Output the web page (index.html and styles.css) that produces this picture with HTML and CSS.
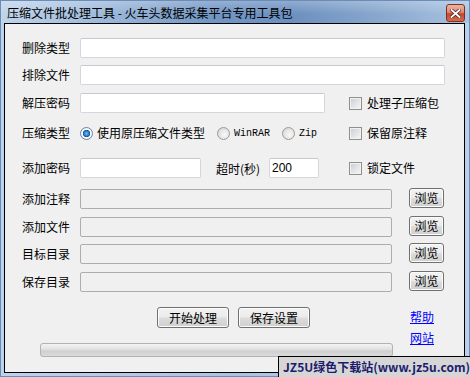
FILE: index.html
```html
<!DOCTYPE html>
<html lang="zh-CN">
<head>
  <meta charset="UTF-8" />
  <title>压缩文件批处理工具</title>
  <link rel="stylesheet" href="styles.css">
</head>
<body>
  <div class="window">
    <!-- ===== title bar ===== -->
    <div class="titlebar">
      <span class="title">压缩文件批处理工具 - 火车头数据采集平台专用工具包</span>
      <span class="close">
        <svg width="11" height="9" viewBox="0 0 11 9">
          <path d="M1.5 1 L9.5 8 M9.5 1 L1.5 8" stroke="#4a2a2a" stroke-width="3.4" stroke-linecap="square"/>
          <path d="M1.5 1 L9.5 8 M9.5 1 L1.5 8" stroke="#fff" stroke-width="1.8" stroke-linecap="square"/>
        </svg>
      </span>
    </div>

    <!-- ===== client area ===== -->
    <div class="client">
      <div class="row">
        <label class="lbl">删除类型</label>
        <input class="txt wide" type="text">
      </div>
      <div class="row gap7">
        <label class="lbl">排除文件</label>
        <input class="txt wide" type="text">
      </div>
      <div class="row gap8">
        <label class="lbl">解压密码</label>
        <div class="main">
          <input class="txt pwd" type="text">
        </div>
        <span class="check"><i class="box"></i>处理子压缩包</span>
      </div>
      <div class="row gap10">
        <label class="lbl">压缩类型</label>
        <div class="main">
          <span class="radio on"></span><span class="rtext">使用原压缩文件类型</span>
          <span class="radio"></span><span class="rtext mono">WinRAR</span>
          <span class="radio"></span><span class="rtext mono">Zip</span>
        </div>
        <span class="check"><i class="box"></i>保留原注释</span>
      </div>
      <div class="row gap15">
        <label class="lbl">添加密码</label>
        <div class="main">
          <input class="txt short" type="text">
          <span class="timeout">超时(秒)</span>
          <input class="txt num" type="text" value="200">
        </div>
        <span class="check"><i class="box"></i>锁定文件</span>
      </div>
      <div class="row gap11">
        <label class="lbl">添加注释</label>
        <input class="txt path" type="text" disabled>
        <button class="browse">浏览</button>
      </div>
      <div class="row gap8">
        <label class="lbl">添加文件</label>
        <input class="txt path" type="text" disabled>
        <button class="browse">浏览</button>
      </div>
      <div class="row gap7">
        <label class="lbl">目标目录</label>
        <input class="txt path" type="text" disabled>
        <button class="browse">浏览</button>
      </div>
      <div class="row gap8">
        <label class="lbl">保存目录</label>
        <input class="txt path" type="text" disabled>
        <button class="browse">浏览</button>
      </div>

      <div class="bottom">
        <div class="actions">
          <div class="buttons">
            <button class="btn">开始处理</button>
            <button class="btn">保存设置</button>
          </div>
          <div class="progress"></div>
        </div>
        <div class="links">
          <a href="#">帮助</a>
          <a href="#">网站</a>
        </div>
      </div>
    </div>

    <div class="watermark">JZ5U绿色下载站(www.jz5u.com)</div>
  </div>
</body>
</html>
```

FILE: styles.css
```css
/* --- base ------------------------------------------------------------ */
* { box-sizing: border-box; margin: 0; padding: 0; }
body { width: 470px; height: 377px; overflow: hidden; background: #fff;
  font-family: "Noto Sans CJK SC", "Liberation Sans", sans-serif; font-size: 12px; color: #000; }

/* --- window frame ---------------------------------------------------- */
.window {
  position: relative;
  width: 470px; height: 377px;
  display: flex; flex-direction: column;
  background: linear-gradient(to right, #bcd3ec 0%, #a9c4e3 50%, #b9d1ea 100%);
  border: 1px solid #6a8cb7;
}
.titlebar {
  height: 22px;
  display: flex; align-items: center; justify-content: space-between;
  padding: 0 4px 0 6px;
  background:
    linear-gradient(to bottom, rgba(255,255,255,.25), rgba(255,255,255,0) 60%),
    linear-gradient(to right, #c0d4ea 0%, #9cb8da 22%, #7296c4 45%, #6b8fbf 62%, #8aa9cf 82%, #a9c3e1 100%);
}
.title { line-height: 16px; padding-top: 1px; letter-spacing: 0; }
.close {
  width: 19px; height: 18px; margin-top: 2px;
  display: flex; align-items: center; justify-content: center;
  border: 1px solid #7b3223; border-radius: 3px;
  background: linear-gradient(to bottom, #eab4a4 0%, #e18a72 45%, #c9462b 55%, #d9684c 100%);
}

/* --- client area ----------------------------------------------------- */
.client {
  flex: 1;
  margin: 0 4px 3px 3px;
  border: 1px solid #000;
  background: #f0f0f0;
  padding: 14px 0 0 17px;
  display: flex; flex-direction: column;
}
.row { display: flex; align-items: center; height: 20px; }
.gap7 { margin-top: 7px; }
.gap8 { margin-top: 8px; }
.gap10 { margin-top: 10px; }
.gap11 { margin-top: 11px; }
.gap15 { margin-top: 15px; }
.lbl { width: 58px; flex: none; line-height: 16px; }
.main { width: 269px; flex: none; display: flex; align-items: center; height: 20px; }

.txt {
  height: 20px;
  border: 1px solid #d3d7dd; border-top-color: #c6cad0; border-radius: 2px;
  background: #fff; font: 12px "Liberation Sans", sans-serif; padding: 0 2px;
}
.txt:disabled { background: #f0f0f0; border-color: #adadad; }
.wide { width: 365px; }
.pwd { width: 245px; }
.short { width: 121px; }
.num { width: 50px; }
.path { width: 312px; }
.timeout { width: 53px; margin-left: 15px; }

/* --- checkbox & radio ------------------------------------------------ */
.check { display: flex; align-items: center; line-height: 16px; }
.box {
  width: 13px; height: 13px; margin-right: 5px;
  border: 1px solid #8f8f8f;
  background: linear-gradient(135deg, #c8cbd0 0%, #e3e5e8 55%, #f6f6f6 100%);
  box-shadow: inset 0 0 0 1px #f2f2f2;
}
.radio {
  width: 13px; height: 13px; flex: none; border-radius: 50%;
  border: 1px solid #9a9a9a;
  background: radial-gradient(circle at 60% 60%, #f8f8f8 0%, #e2e2e2 60%, #c9c9c9 100%);
}
.radio.on {
  border-color: #6a86a8;
  background: radial-gradient(circle, #63c5f5 0%, #1d6fc2 36%, #18468a 44%, #ffffff 50%, #e6e6e6 80%, #c4c4c4 100%);
}
.rtext { margin: 0 12px 0 4px; line-height: 16px; }
.mono { font: 10px "Liberation Mono", monospace; }

/* --- buttons --------------------------------------------------------- */
.browse, .btn {
  font: 12px "Noto Sans CJK SC", sans-serif; color: #000;
  border: 1px solid #707070; border-radius: 3px;
  background: linear-gradient(to bottom, #f3f3f3 0%, #ebebeb 48%, #dddddd 52%, #cfcfcf 100%);
  box-shadow: inset 0 0 0 1px #fcfcfc;
  line-height: 16px;
}
.browse { width: 35px; height: 20px; margin-left: 17px; margin-top: -2px; }

.bottom { display: flex; margin-top: 15px; }
.actions { margin-left: 18px; width: 353px; }
.buttons { display: flex; gap: 9px; margin-left: 117px; }
.btn { width: 72px; height: 21px; }
.progress {
  margin-top: 15px; height: 14px;
  border: 1px solid #b2b2b2; border-radius: 3px;
  background: linear-gradient(to bottom, #f3f3f3 0%, #e4e4e4 40%, #d0d0d0 60%, #dadada 100%);
}
.links { margin-left: 17px; padding-top: 2px; display: flex; flex-direction: column; gap: 5px; }
.links a { color: #0000ff; text-decoration: underline; line-height: 16px; }

/* --- overlay --------------------------------------------------------- */
.watermark {
  position: absolute; left: 277px; top: 355px;
  width: 200px; height: 22px;
  padding: 2px 0 0 4px;
  background: #d6d6d6; border: 1px solid #000;
  color: #1c1c6c; font-weight: bold; font-size: 12px; line-height: 16px;
  white-space: nowrap;
}
```
